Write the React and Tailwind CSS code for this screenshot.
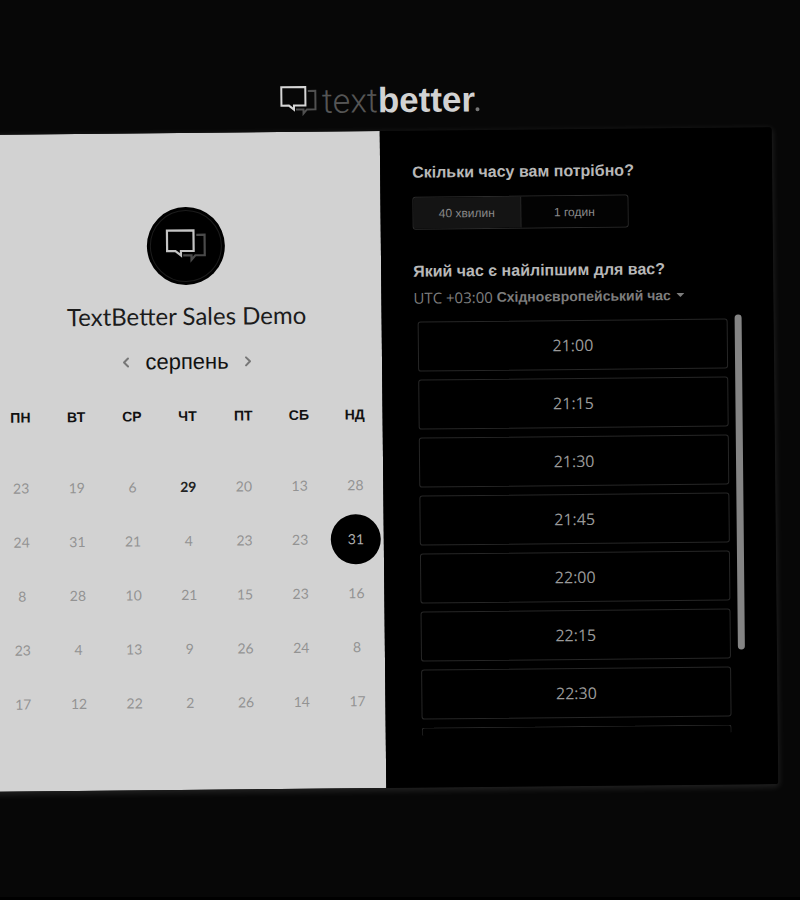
import React from "react";
import { ChevronLeft, ChevronRight } from "lucide-react";

const weekdays = ["пн", "вт", "ср", "чт", "пт", "сб", "нд"];

const weeks = [
  [23, 19, 6, 29, 20, 13, 28],
  [24, 31, 21, 4, 23, 23, 31],
  [8, 28, 10, 21, 15, 23, 16],
  [23, 4, 13, 9, 26, 24, 8],
  [17, 12, 22, 2, 26, 14, 17],
];

const slots = ["21:00", "21:15", "21:30", "21:45", "22:00", "22:15", "22:30"];

function BubblesIcon({ className, front, back }) {
  return (
    <svg viewBox="0 0 38 32" fill="none" strokeWidth="2" className={className} aria-hidden="true">
      <path d="M28.5 6H36V24.5H27.5L24 28.5V24.5H16.5" stroke={back} />
      <path d="M2 2H26V20.5H14.5V24.5L9.5 20.5H2Z" stroke={front} />
    </svg>
  );
}

function Logo() {
  return (
    <a href="#" className="flex items-center gap-1" aria-label="textbetter">
      <BubblesIcon className="h-8 w-[38px]" front="#d6d6d6" back="#505050" />
      <span className="flex items-baseline text-[34px] leading-10">
        <span className="font-['Roboto',sans-serif] font-light text-[#555]">text</span>
        <span className="font-['Liberation_Sans',sans-serif] text-[35px] font-bold text-[#d2d2d2]">better</span>
        <span className="size-1 rounded-full bg-[#777]" />
      </span>
    </a>
  );
}

function Day({ value, available, selected }) {
  let look = "text-[#939393]";
  if (available) look = "font-bold text-[#222]";
  if (selected) look = "bg-black text-[#b0b0b0]";
  return (
    <button type="button" className={"flex size-[50px] items-center justify-center rounded-full text-sm " + look}>
      {value}
    </button>
  );
}

function Calendar() {
  return (
    <section className="flex flex-col items-center bg-[#d2d2d2] pt-[74px] pl-[2px]">
      <div className="flex size-[78px] items-center justify-center rounded-full bg-black p-[3px]">
        <div className="flex size-full items-center justify-center rounded-full border border-[#1c1c1c]">
          <BubblesIcon className="h-9 w-[42px]" front="#c4c4c4" back="#4a4a4a" />
        </div>
      </div>
      <h1 className="mt-[15px] font-['Lato',sans-serif] text-2xl leading-8 text-[#1c1c1c]">TextBetter Sales Demo</h1>
      <div className="mt-[14px] flex items-center gap-[11px]">
        <button type="button" aria-label="Попередній місяць">
          <ChevronLeft className="size-4 text-[#777]" strokeWidth={3} />
        </button>
        <h2 className="font-['Liberation_Sans',sans-serif] text-[22px] leading-8 text-[#111]">серпень</h2>
        <button type="button" aria-label="Наступний місяць">
          <ChevronRight className="size-4 text-[#777]" strokeWidth={3} />
        </button>
      </div>
      <table className="mt-[26px] w-full table-fixed font-['Lato',sans-serif]">
        <thead>
          <tr className="h-14 align-top">
            {weekdays.map((d) => (
              <th key={d} className="p-0 font-['Liberation_Sans',sans-serif] text-sm font-bold leading-6 text-[#111] uppercase">
                {d}
              </th>
            ))}
          </tr>
        </thead>
        <tbody>
          {weeks.map((week, r) => (
            <tr key={r} className="h-[54px]">
              {week.map((n, c) => (
                <td key={c} className="p-0">
                  <div className="flex justify-center">
                    <Day value={n} available={r === 0 && c === 3} selected={r === 1 && c === 6} />
                  </div>
                </td>
              ))}
            </tr>
          ))}
        </tbody>
      </table>
    </section>
  );
}

function Times() {
  return (
    <section className="bg-black px-8 pt-[30px] pb-10">
      <h2 className="font-['Liberation_Sans',sans-serif] text-base leading-6 font-bold text-[#b8b8b8]">Скільки часу вам потрібно?</h2>
      <div className="mt-3 flex h-[33px] w-[216px] overflow-hidden rounded-[3px] border border-[#2b2b2b] font-['Liberation_Sans',sans-serif] text-xs text-[#8a8a8a]">
        <button type="button" className="flex-1 border-r border-[#2b2b2b] bg-[#141414]">40 хвилин</button>
        <button type="button" className="flex-1 bg-[#030303]">1 годин</button>
      </div>
      <h2 className="mt-[30px] font-['Liberation_Sans',sans-serif] text-base leading-6 font-bold text-[#b8b8b8]">Який час є найліпшим для вас?</h2>
      <button type="button" className="mt-[2px] flex items-center leading-6 text-[#7d7d7d]">
        <span className="font-['Open_Sans',sans-serif] text-[15px]">UTC +03:00&nbsp;</span>
        <span className="font-['Liberation_Sans',sans-serif] text-sm font-bold">Східноєвропейський час</span>
        <svg viewBox="0 0 8 4" className="ml-[6px] h-1 w-2 fill-[#7d7d7d]" aria-hidden="true">
          <path d="M0 0H8L4 4Z" />
        </svg>
      </button>
      <div className="mt-2 flex items-start gap-[7px] pl-1">
        <ul className="flex min-w-0 flex-1 flex-col gap-2 pt-1">
          {slots.map((t) => (
            <li key={t}>
              <button type="button" className="h-[50px] w-full rounded-[3px] border border-[#262626] font-['Open_Sans',sans-serif] text-base text-[#9a9a9a]">
                {t}
              </button>
            </li>
          ))}
          <li className="h-2 rounded-t-[3px] border-x border-t border-[#262626]" aria-hidden="true" />
        </ul>
        <div className="h-[335px] w-[7px] rounded-full bg-[#848484]" />
      </div>
    </section>
  );
}

export default function App() {
  return (
    <div className="min-h-screen overflow-hidden border-b-[3px] border-black bg-[#070707]">
      <header className="flex -rotate-[0.57deg] justify-center pt-20 pr-[42px]">
        <Logo />
      </header>
      <main className="mt-[11px] mr-[25px] mb-[109px] -ml-[9px] grid min-h-[657px] -rotate-[0.57deg] grid-cols-2 overflow-hidden rounded-[3px] shadow-[0_2px_6px_1px_#ffffff1c]">
        <Calendar />
        <Times />
      </main>
    </div>
  );
}
